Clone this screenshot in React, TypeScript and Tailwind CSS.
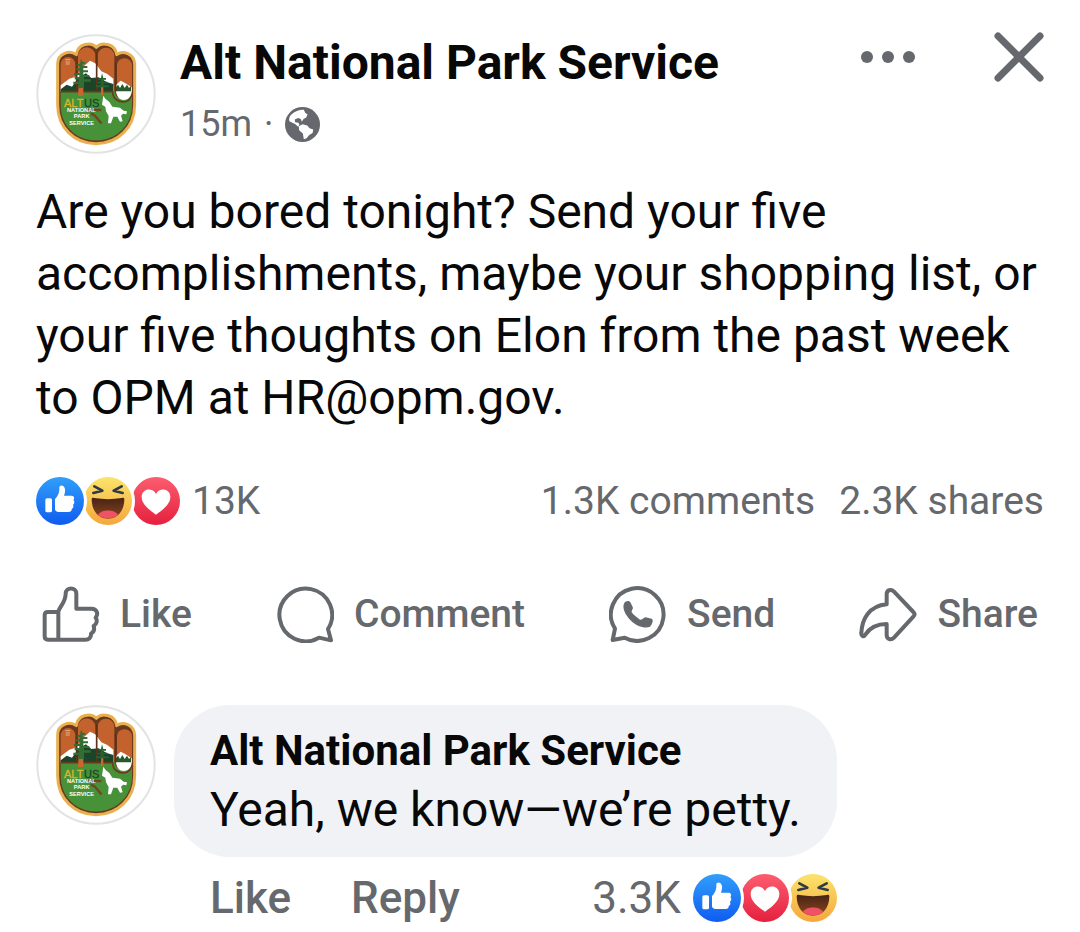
import React, { useId } from "react";

function Avatar() {
  return (
    <svg viewBox="18 18 360 360" className="size-[120px] shrink-0" role="img" aria-label="Alt National Park Service">
      <circle cx="198" cy="198" r="176" fill="#fff" stroke="#e2e3e5" strokeWidth="6" />
      <g strokeLinejoin="round">
        <path
          d="M83 108 C83 74 120 66 139 80 C143 46 184 40 199 58 C214 40 256 46 260 80 C279 66 312 76 314 108 V230 C314 300 262 347 198 347 C134 347 83 300 83 230 Z"
          fill="#6b3a1c"
          stroke="#eab050"
          strokeWidth="9"
        />
        <path d="M92 190 V109 A22 22 0 0 1 136 109 V190 Z" fill="#c4622d" />
        <path d="M144 190 V84 A26 26 0 0 1 196 84 V190 Z" fill="#c4622d" />
        <path d="M203 190 V84 A25 25 0 0 1 253 84 V190 Z" fill="#c4622d" />
        <path d="M261 190 V113 A22 22 0 0 1 306 113 V190 Z" fill="#c4622d" />
        <path d="M92 172 L118 152 L137 146 L158 118 L180 98 L196 106 L214 130 L232 138 L250 152 V192 H92 Z" fill="#fff" />
        <path d="M92 184 L110 170 L126 176 L146 148 L168 136 L184 150 L206 148 L230 162 L250 168 V194 H92 Z" fill="#1c4429" />
        <path d="M92 190 H255 C255 220 298 220 306 192 V230 C306 294 258 337 198 337 C138 337 92 294 92 230 Z" fill="#479138" />
        <path d="M92 191 H248 C248 214 268 222 280 222 C296 222 306 208 306 192" fill="none" stroke="#6b3a1c" strokeWidth="5" />
        <path d="M257 172 L272 158 L284 164 L305 178 C308 204 296 216 281 216 C264 216 256 200 257 172 Z" fill="#fff" />
        <path d="M258 178 L264 170 L270 180 L277 168 L284 180 L291 170 L297 180 L303 174 V190 H258 Z" fill="#28592c" />
        <path d="M140 104 V190 M200 76 V190 M257 104 V190" stroke="#5c3219" strokeWidth="5" />
      </g>
      <path d="M146 170 H160 V204 H144 Z M213 172 H220 V202 H213 Z" fill="#c8662f" />
      <path
        d="M153 92 L158 102 H166 V107 H158 V114 H172 V120 H160 V127 H174 V133 H160 V141 H178 V147 H162 V154 H182 V161 H162 V180 H146 V168 H130 V161 H146 V154 H134 V147 H148 V141 H132 V135 H148 V127 H138 V121 H149 V114 H140 V108 H150 Z"
        fill="#326d34"
      />
      <path d="M216 136 L220 150 H228 V155 H220 V161 H232 V166 H221 V172 H236 V178 H198 V172 H212 V166 H202 V161 H212 V155 H205 V150 H213 Z" fill="#286030" />
      <path d="M106 95 H121 M107 102 H120 M107 108 H119" stroke="#e4b08d" strokeWidth="3" />
      <path d="M170 246 H214 M182 258 C196 256 202 276 215 286" fill="none" stroke="#704722" strokeWidth="7" />
      <path
        d="M220 203 L226 212 L238 222 L247 236 L270 239 L281 248 L291 250 L289 259 L279 257 L273 263 L278 280 L270 281 L262 266 L250 266 L243 286 L234 286 L236 264 L228 250 L226 236 L216 230 Z"
        fill="#fff"
      />
      <g fontFamily="Liberation Sans, sans-serif" fontWeight="700">
        <text x="102" y="236" fontSize="33" fontWeight="400" fill="#d8b52f" stroke="#d8b52f">ALT</text>
        <text x="162" y="236" fontSize="33" fontWeight="400" fill="#17492a" stroke="#17492a">US</text>
        <g fill="#fff" fontSize="17" textAnchor="middle">
          <text x="154" y="252">NATIONAL</text>
          <text x="155" y="271">PARK</text>
          <text x="155" y="290">SERVICE</text>
        </g>
      </g>
    </svg>
  );
}

type Reaction = "like" | "haha" | "love";

function ReactionBadge({ kind, notched }: { kind: Reaction; notched: boolean }) {
  const id = useId();
  const colors = {
    like: ["#2f9bfa", "#0f5cf0"],
    haha: ["#fbe16a", "#f5a63c"],
    love: ["#fb5a6c", "#e5203f"],
  }[kind];
  return (
    <svg viewBox="0 0 144 144" className="size-12 shrink-0" role="img" aria-label={kind}>
      <defs>
        <linearGradient id={id + "g"} x1="0" y1="0" x2="0" y2="1">
          <stop offset="0.05" stopColor={colors[0]} />
          <stop offset="1" stopColor={colors[1]} />
        </linearGradient>
        <linearGradient id={id + "m"} x1="0" y1="0" x2="0" y2="1">
          <stop offset="0" stopColor="#472315" />
          <stop offset="1" stopColor="#8a4520" />
        </linearGradient>
      </defs>
      <circle cx="72" cy="72" r="72" fill={`url(#${id}g)`} />
      {kind === "like" && (
        <g fill="#fff">
          <rect x="28" y="64" width="20" height="42" rx="5" />
          <path d="M57 66 C64 60 69 50 70 40 V32 C70 23 84 22 87 36 C88 44 86 50 84 56 H107 C114 56 117 64 112 69 C117 74 115 80 111 83 C114 89 111 94 107 96 C108 102 104 105 98 105 H68 C61 105 57 101 57 96 Z" />
        </g>
      )}
      {kind === "love" && (
        <path d="M72 113 C52 99 29 82 29 60 C29 34 62 30 72 51 C82 30 115 34 115 60 C115 82 92 99 72 113 Z" fill="#fff" />
      )}
      {kind === "haha" && (
        <>
          <path d="M23 68 C23 62 26 62 31 63 Q72 70 113 63 C118 62 121 62 121 68 C120 100 103 125 72 125 C41 125 24 100 23 68 Z" fill={`url(#${id}m)`} />
          <path d="M42 113 C52 96 92 96 102 113 C92 127 52 127 42 113 Z" fill="#ef5265" />
          <path d="M31 28 L55 41 L28 48 M113 28 L89 41 L116 48" fill="none" stroke="#303a44" strokeWidth="8" strokeLinecap="round" strokeLinejoin="round" />
        </>
      )}
      {notched && <circle cx="-72" cy="72" r="81" fill="#fff" />}
    </svg>
  );
}

function Reactions({ kinds }: { kinds: Reaction[] }) {
  return (
    <span className="flex">
      {kinds.map((kind, i) => (
        <ReactionBadge key={kind} kind={kind} notched={i > 0} />
      ))}
    </span>
  );
}

function GlobeIcon() {
  return (
    <svg viewBox="347 226 104 104" className="size-[35px]" role="img" aria-label="Public">
      <circle cx="399" cy="278" r="52" fill="#65686c" />
      <path
        d="M403 234 C392 233 376 238 366 248 C360 254 358 262 360 268 L369 273 L378 277 L386 285 L390 279 L387 273 L377 271 L376 263 L386 259 L394 262 L397 270 L402 262 L410 257 L414 248 L407 243 Z M388 283 L399 277 L413 281 L420 289 L431 293 L429 303 L419 309 L411 319 L403 322 L400 305 L389 295 Z"
        fill="#fff"
      />
    </svg>
  );
}

const outline = {
  fill: "none",
  stroke: "currentColor",
  strokeWidth: 12,
  strokeLinecap: "round" as const,
  strokeLinejoin: "round" as const,
};

function LikeIcon() {
  return (
    <svg viewBox="36 26 174 174" className="size-[58px]" aria-hidden="true" {...outline}>
      <path d="M85 107 H54 Q44 107 44 117 V180 Q44 190 54 190 H166 C177 190 184 183 183 172 C191 167 194 158 191 149 C200 143 203 133 197 124 C207 111 199 97 185 97 H139 V52 C139 31 107 31 107 52 C107 80 85 94 85 107 V190" />
    </svg>
  );
}

function CommentIcon() {
  return (
    <svg viewBox="738 26 174 174" className="size-[58px]" aria-hidden="true" {...outline}>
      <path d="M867 184 A79 79 0 1 1 894 158 L903 192 Z" />
    </svg>
  );
}

function SendIcon() {
  return (
    <svg viewBox="24 26 174 174" className="size-[58px]" aria-hidden="true" {...outline}>
      <path d="M71 184 A79 79 0 1 0 42 157 L35 191 Z" />
      <path
        d="M70 80 C75 73 84 72 88 78 L95 92 C98 98 91 101 92 108 C99 117 108 124 117 130 C125 132 128 122 134 123 L152 127 C159 131 153 144 147 151 C132 158 106 149 90 133 C72 116 62 93 70 80 Z"
        fill="currentColor"
        stroke="none"
      />
    </svg>
  );
}

function ShareIcon() {
  return (
    <svg viewBox="774 26 174 174" className="size-[58px]" aria-hidden="true" {...outline}>
      <path d="M857 84 V54 C857 41 870 37 879 46 L937 107 Q944 114 937 121 L879 184 C870 193 857 189 857 176 V143 C826 143 807 153 793 175 C788 183 780 180 781 170 C783 128 804 89 857 84 Z" />
    </svg>
  );
}

const actions = [
  { label: "Like", Icon: LikeIcon },
  { label: "Comment", Icon: CommentIcon },
  { label: "Send", Icon: SendIcon },
  { label: "Share", Icon: ShareIcon },
];

export default function App() {
  return (
    <main className="min-h-screen bg-white px-9 pt-[34px] font-['Roboto',sans-serif] text-[#080809]">
      <article>
        <header className="flex items-start gap-6">
          <Avatar />
          <div className="min-w-0 flex-1">
            <h1 className="text-[48px] leading-[58px] font-bold">Alt National Park Service</h1>
            <div className="mt-2.5 flex items-center gap-3 text-[36px] leading-[44px] text-[#65686c]">
              <span>15m</span>
              <span>·</span>
              <GlobeIcon />
            </div>
          </div>
          <div className="flex h-[46px] items-center gap-[78px] text-[#65686c]">
            <button type="button" aria-label="More options">
              <svg viewBox="0 0 56 48" className="h-12 w-14" fill="currentColor">
                <circle cx="7" cy="24" r="6" />
                <circle cx="28" cy="24" r="6" />
                <circle cx="49" cy="24" r="6" />
              </svg>
            </button>
            <button type="button" aria-label="Close">
              <svg viewBox="0 0 50 50" className="size-[50px]" stroke="currentColor" strokeWidth="7" strokeLinecap="round">
                <path d="M4 4 L46 46 M46 4 L4 46" />
              </svg>
            </button>
          </div>
        </header>

        <p className="mt-[27px] text-[48px] leading-[62px]">
          Are you bored tonight? Send your five accomplishments, maybe your shopping list, or your five thoughts on Elon
          from the past week to OPM at HR@opm.gov.
        </p>

        <div className="mt-[47px] flex items-center text-[39px] leading-[50px] text-[#65686c]">
          <Reactions kinds={["like", "haha", "love"]} />
          <span className="ml-3">13K</span>
          <span className="ml-auto">1.3K comments</span>
          <span className="ml-6">2.3K shares</span>
        </div>

        <div className="mt-[58px] flex justify-between px-1.5 text-[39px] leading-[60px] font-medium text-[#65686c]">
          {actions.map(({ label, Icon }) => (
            <button key={label} type="button" className="flex items-center gap-5">
              <Icon />
              {label}
            </button>
          ))}
        </div>
      </article>

      <section className="mt-[61px] flex items-start gap-[18px]" aria-label="Comments">
        <Avatar />
        <div>
          <div className="rounded-[56px] bg-[#f0f2f5] px-9 pt-[19px] pb-[15px]">
            <h2 className="text-[42px] leading-[54px] font-bold">Alt National Park Service</h2>
            <p className="text-[48px] leading-[64px]">Yeah, we know—we’re petty.</p>
          </div>
          <div className="mt-[14px] flex items-center pl-9 text-[44px] leading-[54px] text-[#65686c]">
            <button type="button" className="font-medium">Like</button>
            <button type="button" className="ml-[60px] font-medium">Reply</button>
            <span className="mr-3 ml-auto">3.3K</span>
            <Reactions kinds={["like", "love", "haha"]} />
          </div>
        </div>
      </section>
    </main>
  );
}
